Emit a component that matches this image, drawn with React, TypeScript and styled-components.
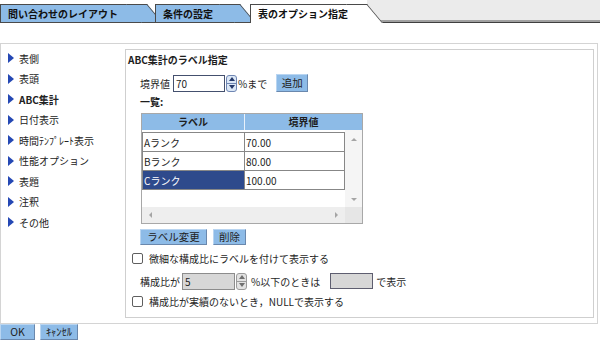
import styled, { createGlobalStyle } from 'styled-components';

const GlobalStyle = createGlobalStyle`
  html, body {
    margin: 0;
    padding: 0;
    background: #fff;
  }
  body {
    font-family: "Noto Sans CJK JP", "Noto Sans", sans-serif;
    font-size: 10px;
    color: #1e1e1e;
  }
  * {
    box-sizing: border-box;
  }
`;

const tabs = [
  { label: '問い合わせのレイアウト', width: 163, overlap: 0 },
  { label: '条件の設定', width: 101, overlap: 8 },
  { label: '表のオプション指定', width: 133, overlap: 6, active: true },
];

const menu = ['表側', '表頭', 'ABC集計', '日付表示', '時間ﾃﾝﾌﾟﾚｰﾄ表示', '性能オプション', '表題', '注釈', 'その他'];

const ranks = [
  { label: 'Aランク', value: '70.00' },
  { label: 'Bランク', value: '80.00' },
  { label: 'Cランク', value: '100.00', selected: true },
];

export default function App() {
  return (
    <Page>
      <GlobalStyle />
      <TabBar>
        {tabs.map((t, i) => (
          <Tab key={t.label} $w={t.width} $overlap={t.overlap} $z={i + 1} $active={t.active}>
            {t.label}
          </Tab>
        ))}
        <TabFiller />
      </TabBar>

      <Frame>
        <SideMenu>
          {menu.map((m) => (
            <MenuItem key={m} $current={m === 'ABC集計'}>
              <Arrow />
              {m}
            </MenuItem>
          ))}
        </SideMenu>

        <OptionBox>
          <BoxTitle>ABC集計のラベル指定</BoxTitle>

          <FieldRow>
            <span>境界値</span>
            <NumInput $w={52}>70</NumInput>
            <Spinner />
            <Text $ml={1}>%まで</Text>
            <Button $w={32} $h={18} $ml={9}>追加</Button>
          </FieldRow>

          <ListLabel>一覧:</ListLabel>

          <TableBox>
            <HeadRow>
              <HeadCell $w={103}>ラベル</HeadCell>
              <HeadCell>境界値</HeadCell>
            </HeadRow>
            <TableBody>
              <RowsArea>
                <RankTable>
                  <tbody>
                    {ranks.map((r) => (
                      <tr key={r.label}>
                        <Cell $w={102} $selected={r.selected}>{r.label}</Cell>
                        <Cell>{r.value}</Cell>
                      </tr>
                    ))}
                  </tbody>
                </RankTable>
              </RowsArea>
              <VScroll>
                <ScrollArrow $dir="up" />
                <ScrollArrow $dir="down" />
              </VScroll>
              <HScroll>
                <ScrollArrow $dir="left" />
                <ScrollArrow $dir="right" />
              </HScroll>
              <Corner />
            </TableBody>
          </TableBox>

          <ButtonRow>
            <Button $w={67}>ラベル変更</Button>
            <Button $w={33}>削除</Button>
          </ButtonRow>

          <CheckRow $mt={5}>
            <CheckBox />
            微細な構成比にラベルを付けて表示する
          </CheckRow>

          <FieldRow $mt={6}>
            <span>構成比が</span>
            <NumInput $w={53} $off $ml={2}>5</NumInput>
            <Spinner off />
            <Text $ml={4}>%以下のときは</Text>
            <GrayBox />
            <Text $ml={3}>で表示</Text>
          </FieldRow>

          <CheckRow $mt={3}>
            <CheckBox />
            構成比が実績のないとき，NULLで表示する
          </CheckRow>
        </OptionBox>
      </Frame>

      <FooterButtons>
        <Button $w={35}>OK</Button>
        <Button $w={38}>ｷｬﾝｾﾙ</Button>
      </FooterButtons>
    </Page>
  );
}

const Spinner = ({ off }: { off?: boolean }) => (
  <Spin $off={off}>
    <SpinHalf $off={off}>
      <SpinArrow $off={off} />
    </SpinHalf>
    <SpinHalf $off={off} $down>
      <SpinArrow $off={off} $down />
    </SpinHalf>
  </Spin>
);

const Page = styled.div`
  width: 600px;
  height: 345px;
  overflow: hidden;
  background: #fff;
`;

const TabBar = styled.div`
  display: flex;
  align-items: flex-end;
  height: 23px;
`;

const Tab = styled.div<{ $w: number; $overlap: number; $z: number; $active?: boolean }>`
  position: relative;
  z-index: ${(p) => p.$z};
  flex: none;
  width: ${(p) => p.$w}px;
  height: 19px;
  margin-left: ${(p) => -p.$overlap}px;
  padding-left: 8px;
  font-weight: bold;
  font-size: 10px;
  line-height: 19px;
  color: #111;
  white-space: nowrap;

  &::before,
  &::after {
    content: '';
    position: absolute;
    z-index: -1;
    top: 0;
    bottom: 0;
    background: ${(p) => (p.$active ? '#fff' : '#8dbbe7')};
    border-top: 1px solid #4a4a4a;
    border-bottom: ${(p) => (p.$active ? 'none' : '1px solid #4a4a4a')};
  }

  &::before {
    left: 0;
    right: 16px;
    border-left: 1px solid #4a4a4a;
  }

  &::after {
    right: 16px;
    width: 20px;
    border-right: 1px solid #4a4a4a;
    transform: skewX(40deg);
    transform-origin: top left;
  }
`;

const TabFiller = styled.div`
  position: relative;
  z-index: 0;
  flex: 1;
  align-self: stretch;
  margin-left: -16px;
  background: #ebebeb;
  border-bottom: 1px solid #3f3f3f;
  box-shadow: inset 0 -2px 0 #a0a0a0;
`;

const Frame = styled.div`
  display: flex;
  width: 598px;
  height: 281px;
  margin-top: 20px;
  padding: 5px 3px 5px 0;
  border: 1px solid #d4d4d4;
`;

const SideMenu = styled.div`
  flex: none;
  width: 124px;
  margin-top: -1px;
  padding-left: 7px;
`;

const MenuItem = styled.div<{ $current?: boolean }>`
  display: flex;
  align-items: center;
  gap: 5px;
  height: 20.5px;
  font-weight: ${(p) => (p.$current ? 'bold' : 'normal')};
  color: #222;
  white-space: nowrap;
`;

const Arrow = styled.span`
  width: 0;
  height: 0;
  border-left: 6px solid #2548b4;
  border-top: 5px solid transparent;
  border-bottom: 5px solid transparent;
`;

const OptionBox = styled.div`
  flex: 1;
  display: flex;
  flex-direction: column;
  padding: 1px 0 0 2px;
  border: 1px solid #cfcfcf;
`;

const BoxTitle = styled.div`
  margin-top: 1px;
  line-height: 16px;
  font-weight: bold;
`;

const FieldRow = styled.div<{ $mt?: number }>`
  display: flex;
  align-items: center;
  height: 18px;
  margin-top: ${(p) => p.$mt ?? 6}px;
  padding-left: 12px;
  white-space: nowrap;
`;

const Text = styled.span<{ $ml?: number }>`
  margin-left: ${(p) => p.$ml ?? 0}px;
`;

const NumInput = styled.div<{ $w: number; $off?: boolean; $ml?: number }>`
  width: ${(p) => p.$w}px;
  height: 17px;
  margin-left: ${(p) => p.$ml ?? 3}px;
  padding-left: 2px;
  line-height: 15px;
  background: ${(p) => (p.$off ? '#d7d7d7' : '#fff')};
  border: 1px solid ${(p) => (p.$off ? '#8c8c8c' : '#44506e')};
`;

const Spin = styled.div<{ $off?: boolean }>`
  display: flex;
  flex-direction: column;
  width: 11px;
  height: 17px;
  margin-left: 1px;
  border: 1px solid ${(p) => (p.$off ? '#9b9b9b' : '#6f86b3')};
  border-radius: 3px;
  overflow: hidden;
  background: ${(p) => (p.$off ? '#e2e2e2' : '#dbe7f6')};
`;

const SpinHalf = styled.div<{ $off?: boolean; $down?: boolean }>`
  flex: 1;
  display: flex;
  align-items: center;
  justify-content: center;
  border-top: ${(p) => (p.$down ? `1px solid ${p.$off ? '#9b9b9b' : '#6f86b3'}` : 'none')};
`;

const SpinArrow = styled.span<{ $off?: boolean; $down?: boolean }>`
  width: 0;
  height: 0;
  border-left: 3.5px solid transparent;
  border-right: 3.5px solid transparent;
  ${(p) => (p.$down ? 'border-top' : 'border-bottom')}: 4px solid ${(p) => (p.$off ? '#707070' : '#24396a')};
`;

const Button = styled.button<{ $w: number; $h?: number; $ml?: number }>`
  flex: none;
  width: ${(p) => p.$w}px;
  height: ${(p) => p.$h ?? 16}px;
  margin-left: ${(p) => p.$ml ?? 0}px;
  padding: 0;
  font-family: inherit;
  font-size: 10.5px;
  line-height: 1;
  color: #222;
  background: #8dbbe7;
  border: 1px solid;
  border-color: #b9d5f1 #6a88ad #6a88ad #b9d5f1;
`;

const ListLabel = styled.div`
  margin-top: 2px;
  padding-left: 12px;
  line-height: 16px;
  font-weight: bold;
`;

const TableBox = styled.div`
  display: flex;
  flex-direction: column;
  width: 222px;
  height: 111px;
  margin: 3px 0 0 13px;
  border: 1px solid #a8a8a8;
`;

const HeadRow = styled.div`
  display: flex;
  height: 16px;
  background: #8dbbe7;
  font-weight: bold;
`;

const HeadCell = styled.div<{ $w?: number }>`
  ${(p) => (p.$w ? `width: ${p.$w}px; border-right: 1px solid #e8f1fb;` : 'flex: 1;')}
  line-height: 16px;
  text-align: center;
`;

const TableBody = styled.div`
  flex: 1;
  display: grid;
  grid-template-columns: 1fr 17px;
  grid-template-rows: 1fr 16px;
`;

const RowsArea = styled.div`
  padding-top: 2px;
  background: #fff;
`;

const RankTable = styled.table`
  width: 203px;
  border-collapse: collapse;
  table-layout: fixed;
`;

const Cell = styled.td<{ $w?: number; $selected?: boolean }>`
  ${(p) => (p.$w ? `width: ${p.$w}px;` : '')}
  height: 19px;
  padding: 0 0 0 1px;
  border: 1px solid #878787;
  line-height: 17px;
  background: ${(p) => (p.$selected ? '#2e4a8c' : '#fff')};
  color: ${(p) => (p.$selected ? '#fff' : '#1e1e1e')};
`;

const VScroll = styled.div`
  display: flex;
  flex-direction: column;
  align-items: center;
  justify-content: space-between;
  padding: 8px 0 6px;
  background: #f5f5f5;
`;

const HScroll = styled.div`
  display: flex;
  align-items: center;
  justify-content: space-between;
  padding: 0 7px 0 7px;
  background: #eeeeee;
`;

const Corner = styled.div`
  background: #e6e6e6;
`;

const arrowBorders = {
  up: 'border-left: 3px solid transparent; border-right: 3px solid transparent; border-bottom: 3px solid #a5a5a5;',
  down: 'border-left: 3px solid transparent; border-right: 3px solid transparent; border-top: 3px solid #a5a5a5;',
  left: 'border-top: 3px solid transparent; border-bottom: 3px solid transparent; border-right: 3px solid #a5a5a5;',
  right: 'border-top: 3px solid transparent; border-bottom: 3px solid transparent; border-left: 3px solid #a5a5a5;',
};

const ScrollArrow = styled.span<{ $dir: keyof typeof arrowBorders }>`
  width: 0;
  height: 0;
  ${(p) => arrowBorders[p.$dir]}
`;

const ButtonRow = styled.div`
  display: flex;
  gap: 6px;
  margin-top: 5px;
  padding-left: 12px;
`;

const CheckRow = styled.div<{ $mt: number }>`
  display: flex;
  align-items: center;
  gap: 6px;
  height: 16px;
  margin-top: ${(p) => p.$mt}px;
  padding-left: 4px;
  white-space: nowrap;
`;

const CheckBox = styled.span`
  flex: none;
  width: 11px;
  height: 11px;
  background: #fff;
  border: 1px solid #5f5f5f;
  border-radius: 2px;
`;

const GrayBox = styled.div`
  width: 43px;
  height: 16px;
  margin-left: 10px;
  background: #d7d7d7;
  border: 1px solid #5e5e70;
`;

const FooterButtons = styled.div`
  display: flex;
  gap: 5px;
`;
